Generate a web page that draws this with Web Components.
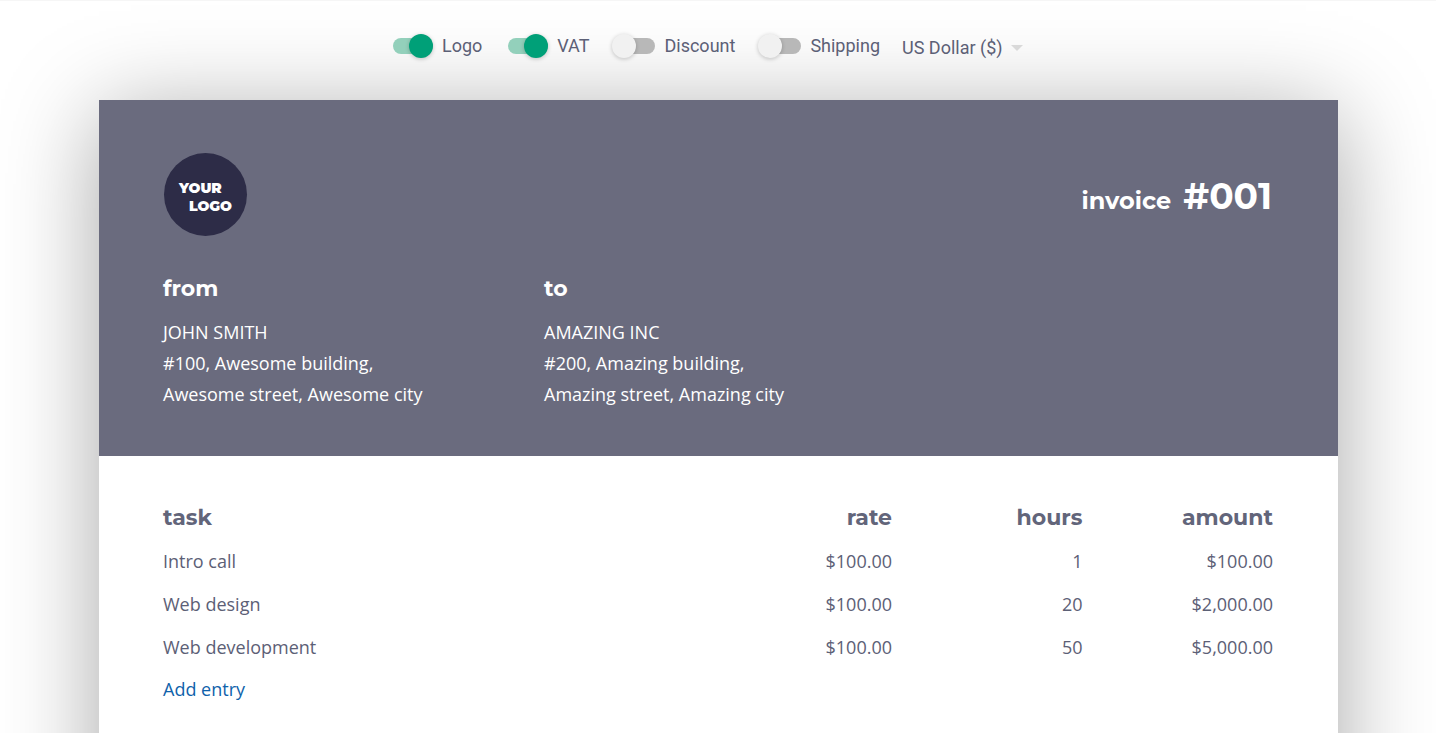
<!DOCTYPE html>
<html lang="en">
<head>
<meta charset="utf-8">
<meta name="viewport" content="width=device-width, initial-scale=1">
<title>Invoice #001</title>
<style>
  html { scrollbar-width: none; }
  body {
    margin: 0;
    background: #fff;
    color: #5c6076;
    font: 18px/31px "Open Sans", sans-serif;
    --slate: #6a6b7e;
    --heading-font: Montserrat, Inter, sans-serif;
    --ui-font: Roboto, sans-serif;
  }
</style>
</head>
<body>
<invoice-app></invoice-app>
<script>
const define = (name, html, setup) => {
  const template = document.createElement('template');
  template.innerHTML = html;
  customElements.define(name, class extends HTMLElement {
    connectedCallback() {
      if (this.shadowRoot) return;
      this.attachShadow({ mode: 'open' }).append(template.content.cloneNode(true));
      if (setup) setup(this, this.shadowRoot);
    }
  });
};

define('option-switch', `
<style>
  :host { display: block; }
  label { display: flex; align-items: center; gap: 9px; cursor: pointer; font: 18px/24px var(--ui-font); }
  input {
    appearance: none; display: flex; align-items: center; margin: 0;
    width: 40px; height: 16px; border-radius: 8px; background: #b8b8b8; cursor: pointer;
  }
  input::before {
    content: ""; flex: none; width: 24px; height: 24px; border-radius: 50%;
    margin-left: -3px; background: #f1f1f1; box-shadow: 0 1px 4px rgba(0,0,0,.22);
  }
  input:checked { background: #93d0bb; justify-content: flex-end; }
  input:checked::before { margin-left: 0; background: #00a078; }
</style>
<label><input type="checkbox" role="switch"><span><slot></slot></span></label>`,
(host, root) => { root.querySelector('input').checked = host.hasAttribute('checked'); });

define('currency-select', `
<style>
  :host { display: grid; align-items: center; margin: 4px 0 0 -4px; }
  select, svg { grid-area: 1 / 1; }
  select {
    appearance: none; border: 0; margin: 0; padding: 0 40px 0 0; background: none;
    color: inherit; font: 18px/24px var(--ui-font); cursor: pointer;
  }
  svg { justify-self: end; margin-right: 20px; pointer-events: none; }
</style>
<select aria-label="Currency"><option>US Dollar ($)</option></select>
<svg width="12" height="6" viewBox="0 0 12 6" aria-hidden="true"><path d="M0 0H12L6 6Z" fill="#d9d9d9"/></svg>`);

define('options-bar', `
<style>
  :host { display: flex; justify-content: center; align-items: center; gap: 26px; padding: 32px 0 41px; height: 26px; }
</style>
<slot></slot>`);

define('company-logo', `
<style>
  :host {
    display: flex; flex-direction: column; justify-content: center; box-sizing: border-box;
    width: 83px; height: 83px; padding: 4px 15px 0; border-radius: 50%;
    background: #2d2c47; color: #fff; font: 900 14px/18px var(--heading-font);
  }
  .second { align-self: flex-end; }
</style>
<span>YOUR</span><span class="second">LOGO</span>`);

define('address-block', `
<style>
  :host { display: block; padding: 0 16px; }
  h2 { margin: 0 0 12px; font: 700 22px/32px var(--heading-font); }
  p { margin: 0; }
</style>
<h2><slot name="title"></slot></h2>
<p><slot></slot></p>`);

define('invoice-header', `
<style>
  :host { display: block; padding: 53px 48px 46px; background: var(--slate); color: #fff; }
  .top { display: flex; justify-content: space-between; align-items: center; padding: 0 18px 0 17px; margin-bottom: 37px; }
  h1 { display: flex; align-items: baseline; gap: 12px; margin: 8px 0 0; font: 700 24px/44px var(--heading-font); }
  .number { font-size: 36px; }
  .parties { display: grid; grid-template-columns: repeat(3, 1fr); }
</style>
<div class="top">
  <company-logo></company-logo>
  <h1><span>invoice</span><span class="number"><slot name="number"></slot></span></h1>
</div>
<div class="parties"><slot></slot></div>`);

define('task-table', `
<style>
  :host { display: block; padding: 40px 48px 160px; }
  table { width: 100%; table-layout: fixed; border-collapse: collapse; }
  col.task { width: 50%; }
  th, td { height: 43px; padding: 0 17px 0 16px; text-align: right; font-weight: 400; }
  th:first-child, td:first-child { text-align: left; }
  thead th { height: 44px; font: 700 22px/32px var(--heading-font); color: #62657a; }
  button { padding: 0; margin: 5px 16px; border: 0; background: none; color: #0f62ab; font: inherit; cursor: pointer; }
</style>
<table>
  <colgroup><col class="task"><col><col><col></colgroup>
  <thead><tr><th scope="col">task</th><th scope="col">rate</th><th scope="col">hours</th><th scope="col">amount</th></tr></thead>
  <tbody></tbody>
</table>
<button type="button">Add entry</button>`,
(host, root) => {
  const rows = [
    ['Intro call', '$100.00', '1', '$100.00'],
    ['Web design', '$100.00', '20', '$2,000.00'],
    ['Web development', '$100.00', '50', '$5,000.00'],
  ];
  const body = root.querySelector('tbody');
  for (const row of rows) {
    const tr = body.insertRow();
    for (const value of row) tr.insertCell().textContent = value;
  }
});

define('invoice-sheet', `
<style>
  :host { display: block; margin: 0 98px 0 99px; background: #fff; box-shadow: 0 14px 90px rgba(0,0,0,.35); }
</style>
<slot></slot>`);

define('invoice-app', `
<style>
  :host { display: block; overflow: hidden; border-top: 1px solid #f6f6f6; }
</style>
<options-bar>
  <option-switch checked>Logo</option-switch>
  <option-switch checked>VAT</option-switch>
  <option-switch>Discount</option-switch>
  <option-switch>Shipping</option-switch>
  <currency-select></currency-select>
</options-bar>
<invoice-sheet>
  <invoice-header>
    <span slot="number">#001</span>
    <address-block><span slot="title">from</span>JOHN SMITH<br>#100, Awesome building,<br>Awesome street, Awesome city</address-block>
    <address-block><span slot="title">to</span>AMAZING INC<br>#200, Amazing building,<br>Amazing street, Amazing city</address-block>
  </invoice-header>
  <task-table></task-table>
</invoice-sheet>`);
</script>
</body>
</html>
